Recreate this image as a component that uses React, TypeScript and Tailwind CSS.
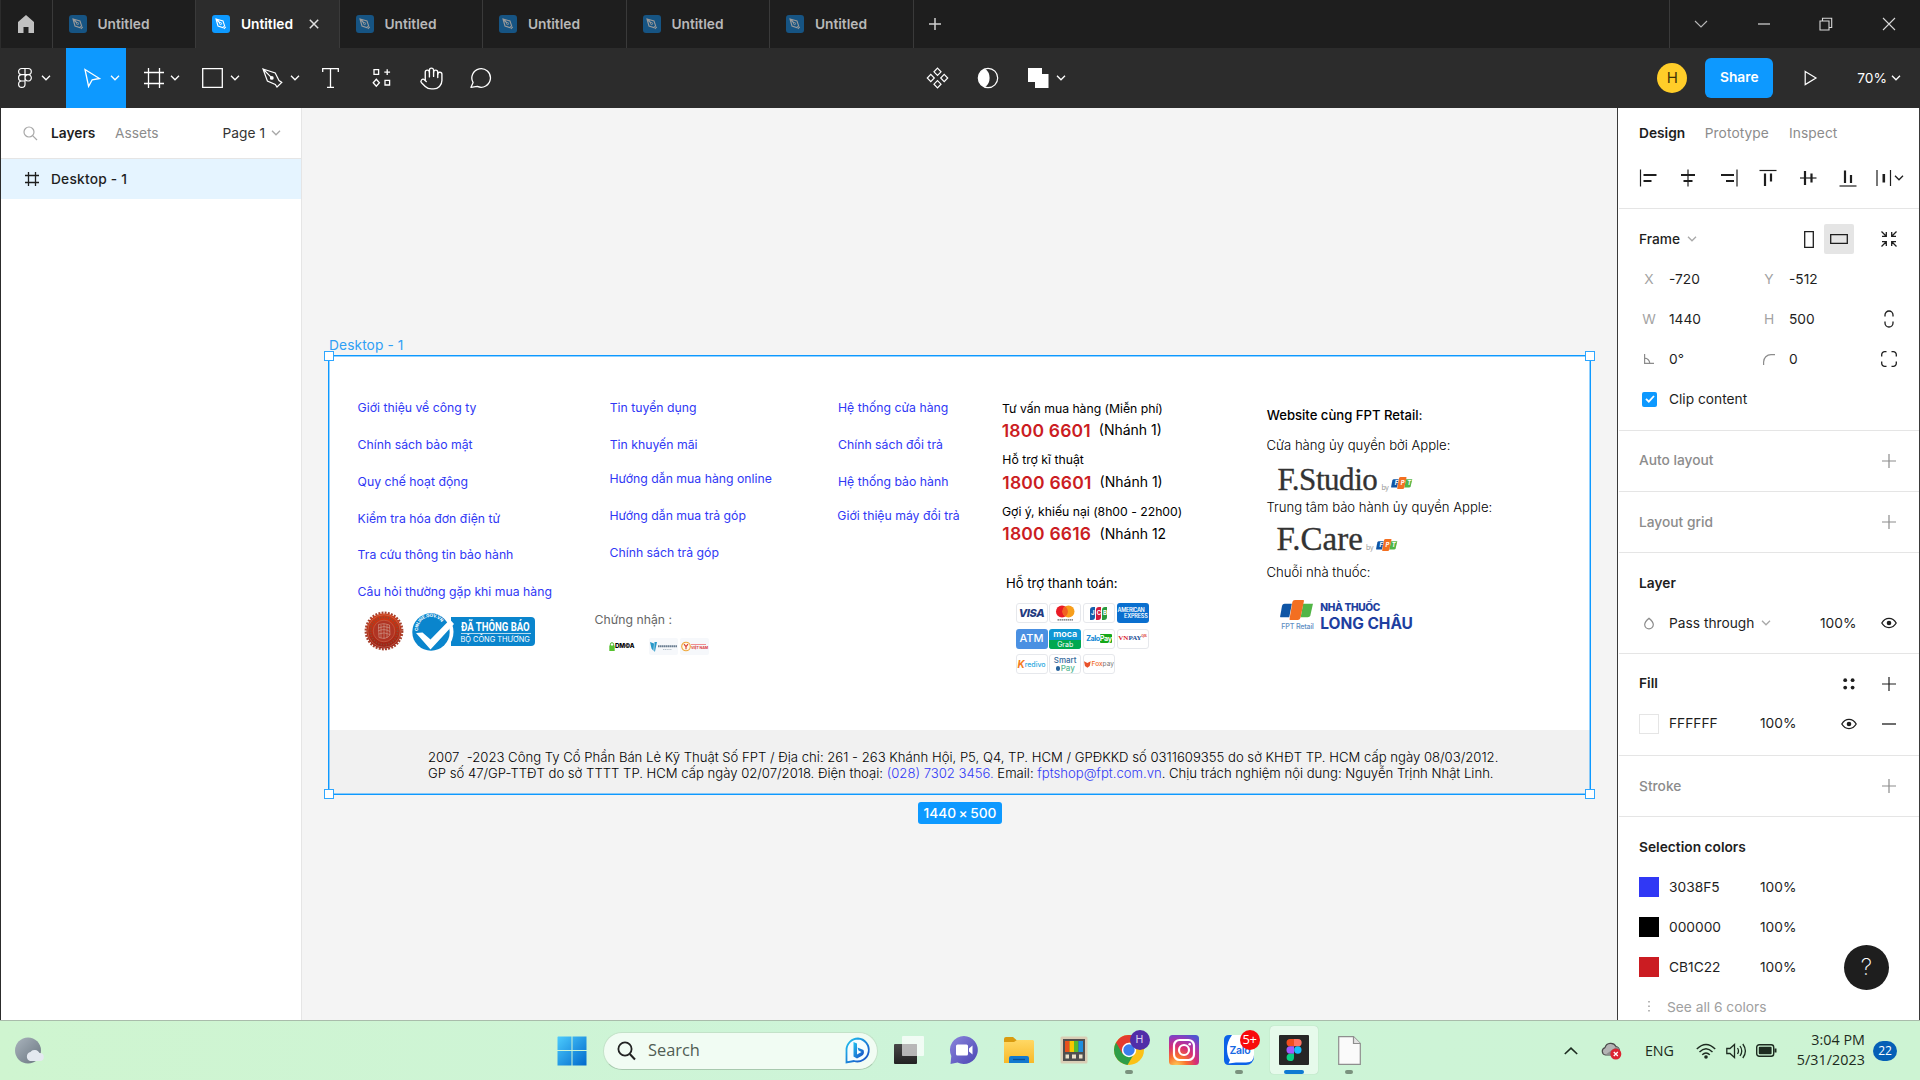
import type { ReactNode } from "react";
import { Hand } from "lucide-react";

type IconProps = { w: number; h: number; className?: string; children: ReactNode };

function Icon({ w, h, className = "", children }: IconProps) {
  return (
    <svg width={w} height={h} viewBox={`0 0 ${w} ${h}`} fill="none" stroke="currentColor" className={`block shrink-0 ${className}`}>
      {children}
    </svg>
  );
}

function Chevron({ className = "" }: { className?: string }) {
  return (
    <Icon w={10} h={6} className={className}>
      <path d="M1 .8 5 4.8 9 .8" strokeWidth="1.3" />
    </Icon>
  );
}

/* ---------- Title bar ---------- */

function PenBadge({ active }: { active: boolean }) {
  return (
    <span className={`flex h-[18px] w-[18px] items-center justify-center rounded-[3px] ${active ? "bg-[#0d99ff] text-white" : "bg-[#165483] text-[#9a9a9a]"}`}>
      <Icon w={12} h={12}>
        <path d="M1 1 8 3 9.6 7.8 7.8 9.6 3 8Z M1 1 5 5 M8.8 10.8 10.8 8.8" strokeWidth="1.1" />
        <circle cx="5.6" cy="5.6" r="1" strokeWidth=".9" />
      </Icon>
    </span>
  );
}

function Tab({ active = false }: { active?: boolean }) {
  return (
    <div className={`flex h-12 w-[143.5px] items-center border-r border-[#3a3a3a] pl-[16.4px] ${active ? "bg-[#2c2c2c] text-white" : "text-[#b8b8b8]"}`}>
      <PenBadge active={active} />
      <span className="ml-[10.5px] font-semibold">Untitled</span>
      {active && (
        <Icon w={10} h={10} className="ml-4 text-[#e0e0e0]">
          <path d="M.8.8 9.2 9.2M9.2.8.8 9.2" strokeWidth="1.5" />
        </Icon>
      )}
    </div>
  );
}

function TitleBar() {
  return (
    <header className="flex h-12 bg-[#1e1e1e]">
      <div className="flex w-[52.5px] items-center border-r border-[#3a3a3a] border-l border-l-[#2c2c2c] pl-[17px]">
        <Icon w={16} h={18} className="text-[#c0c0c0]">
          <path d="M0 7 8 0 16 7V18H10.5V12H5.5V18H0Z" fill="currentColor" stroke="none" />
        </Icon>
      </div>
      <Tab />
      <Tab active />
      <Tab />
      <Tab />
      <Tab />
      <Tab />
      <div className="flex w-[43px] items-center justify-center text-[#d0d0d0]">
        <Icon w={12} h={12}>
          <path d="M6 0V12M0 6H12" strokeWidth="1.5" />
        </Icon>
      </div>
      <div className="ml-auto grid w-[251px] grid-cols-4 border-l border-[#3a3a3a] text-[#b8b8b8]">
        <div className="flex items-center justify-center">
          <Icon w={14} h={8}><path d="M1 1 7 7 13 1" strokeWidth="1.1" /></Icon>
        </div>
        <div className="flex items-center justify-center text-[#d8d8d8]">
          <Icon w={12} h={2}><path d="M0 1H12" strokeWidth="1.2" /></Icon>
        </div>
        <div className="flex items-center justify-center text-[#d8d8d8]">
          <Icon w={14} h={14}><path d="M1 4H10V13H1ZM3.5 4V1.3H12.7V10.5H10" strokeWidth="1.1" /></Icon>
        </div>
        <div className="flex items-center justify-center text-[#d8d8d8]">
          <Icon w={14} h={14}><path d="M1 1 13 13M13 1 1 13" strokeWidth="1.1" /></Icon>
        </div>
      </div>
    </header>
  );
}

/* ---------- Toolbar ---------- */

function Toolbar() {
  return (
    <div className="flex h-[60px] items-center bg-[#2c2c2c] text-white">
      <div className="flex w-[66px] items-center pl-[17px]">
        <Icon w={16} h={22}>
          <path d="M8 1.5H4.7a3.1 3.1 0 0 0 0 6.2H8ZM8 1.5h3.2a3.1 3.1 0 0 1 0 6.2H8ZM8 7.7H4.7a3.1 3.1 0 0 0 0 6.3H8ZM8 14H4.7a3.2 3.2 0 1 0 3.3 3.2ZM11.2 7.7a3.15 3.15 0 1 0 .01 0Z" strokeWidth="1.2" />
        </Icon>
        <Chevron className="ml-2" />
      </div>
      <div className="flex h-full w-[60px] items-center bg-[#0d99ff] pl-[18px]">
        <Icon w={17} h={20}><path d="M1 1.5 15.5 10.5 8.2 11.8 4.6 18.4Z" strokeWidth="1.3" /></Icon>
        <Chevron className="ml-[9px]" />
      </div>
      <div className="flex w-[62px] items-center pl-[18px]">
        <Icon w={20} h={20}><path d="M4.5 0V20M15.5 0V20M0 4.5H20M0 15.5H20" strokeWidth="1.3" /></Icon>
        <Chevron className="ml-[6px]" />
      </div>
      <div className="flex w-[60px] items-center pl-[14px]">
        <Icon w={21} h={20}><path d="M.7.7H20.3V19.3H.7Z" strokeWidth="1.3" /></Icon>
        <Chevron className="ml-[7px]" />
      </div>
      <div className="flex w-[60px] items-center pl-[14px]">
        <Icon w={21} h={20}>
          <path d="M1 1 13.2 5 17 12.5 19.8 14.4 15 19 13.3 16.4 5.4 13ZM1 1 9 9.2" strokeWidth="1.2" />
          <circle cx="9.8" cy="9.9" r="1.9" fill="currentColor" stroke="none" />
        </Icon>
        <Chevron className="ml-[7px]" />
      </div>
      <div className="flex w-[52px] justify-center pr-[8px]">
        <Icon w={17} h={20}><path d="M.7 4V.7H16.3V4M8.5.7V19.3M5 19.3H12" strokeWidth="1.3" /></Icon>
      </div>
      <div className="flex w-[44px] justify-center">
        <Icon w={20} h={20}>
          <path d="M2 1.7H6.6V6.3H2ZM15.2 1.2V7M12.3 4.1H18.1M4.3 11.2 7.4 14.7 4.3 18.2 1.2 14.7ZM13 12.3H17.6V17H13Z" strokeWidth="1.3" />
        </Icon>
      </div>
      <div className="flex w-[54px] justify-center">
        <Hand size={25} strokeWidth={1.3} />
      </div>
      <div className="flex w-[46px] justify-center">
        <Icon w={23} h={22}><path d="M1 20.3 3.1 15.6A9.3 9.3 0 1 1 7.3 19.4Z" strokeWidth="1.3" strokeLinejoin="round" /></Icon>
      </div>

      <div className="ml-[422px] flex items-center">
        <Icon w={23} h={22}>
          <path d="M11.5 1.2 15 4.8 11.5 8.4 8 4.8ZM11.5 13.6 15 17.2 11.5 20.8 8 17.2ZM4.8 7.4 8.3 11 4.8 14.6 1.3 11ZM18.2 7.4 21.7 11 18.2 14.6 14.7 11Z" strokeWidth="1.2" />
        </Icon>
        <Icon w={22} h={22} className="ml-[27.5px]">
          <circle cx="11" cy="11" r="9.7" strokeWidth="1.2" />
          <path d="M8 1.8A9.8 9.8 0 0 0 8 20.2Q12.6 17 12.6 11T8 1.8Z" fill="currentColor" stroke="none" />
        </Icon>
        <Icon w={21} h={20} className="ml-[29.5px]"><path d="M0 0H14V6H20.5V20H7V14H0Z" fill="currentColor" stroke="none" /></Icon>
        <Chevron className="ml-[7px]" />
      </div>

      <div className="ml-auto flex items-center">
        <div className="flex h-[30px] w-[30px] items-center justify-center rounded-full bg-[#ffcd29] text-[15px] text-[#403307]">H</div>
        <div className="ml-[18px] flex h-10 w-[68px] items-center justify-center rounded-[6px] bg-[#0d99ff] pb-0.5 font-semibold">Share</div>
        <Icon w={14} h={16} className="ml-[31px]"><path d="M1.2 1.4 12 8 1.2 14.6Z" strokeWidth="1.2" /></Icon>
        <span className="ml-[39px]">70%</span>
        <Chevron className="mr-[19px] ml-[4px]" />
      </div>
    </div>
  );
}

/* ---------- Left panel ---------- */

function LayersPanel() {
  return (
    <aside className="w-[302px] border-r border-l border-[#e5e5e5] border-l-[#2c2c2c] bg-white text-[#1e1e1e]">
      <div className="flex h-[51px] items-center border-b border-[#e5e5e5] pl-[22px]">
        <Icon w={15} h={15} className="text-[#a8a8a8]">
          <circle cx="6" cy="6" r="5" strokeWidth="1.2" />
          <path d="M9.6 9.6 14 14" strokeWidth="1.2" />
        </Icon>
        <span className="ml-[13px] font-semibold">Layers</span>
        <span className="ml-[19.5px] text-[#8c8c8c]">Assets</span>
        <span className="ml-[64px] text-[#333]">Page 1</span>
        <Chevron className="ml-[6px] text-[#a8a8a8]" />
      </div>
      <div className="flex h-10 items-center bg-[#e5f4ff] pl-6">
        <Icon w={14} h={14}><path d="M3.5 0V14M10.5 0V14M0 3.5H14M0 10.5H14" strokeWidth="1.3" /></Icon>
        <span className="ml-[12px] font-medium tracking-[0.2px]">Desktop - 1</span>
      </div>
    </aside>
  );
}

/* ---------- Canvas ---------- */

function FptMark({ w, h }: { w: number; h: number }) {
  return (
    <svg width={w} height={h} viewBox="0 0 66 38" preserveAspectRatio="none" className="block shrink-0">
      <path d="M9 7H23L18 33H1Q0 33 .3 31L4 11Q5 7 9 7Z" fill="#0f55a5" />
      <path d="M45 7H64L59 29Q58 33 54 33H40Z" fill="#51b546" />
      <path d="M29 0H45Q47 0 46.500 2L40 33Q39 38 35 38H20Q18 38 18.500 36L24 4Q25 0 29 0Z" fill="#f36f21" />
    </svg>
  );
}

function FptMarkWithLetters() {
  return (
    <div className="relative">
      <FptMark w={22} h={12} />
      <span className="absolute inset-0 flex items-center justify-around pr-[1px] pl-[2px] text-[6px] leading-none font-bold text-white italic">
        <i>F</i><i>P</i><i>T</i>
      </span>
    </div>
  );
}

function Seal() {
  return (
    <svg width="40" height="40" viewBox="0 0 40 40" className="block">
      <defs>
        <linearGradient id="seal" x1="0" y1="0" x2="0" y2="1"><stop stopColor="#d23a14" /><stop offset="1" stopColor="#9d2016" /></linearGradient>
      </defs>
      <circle cx="20" cy="20" r="18.300" fill="none" stroke="#a5402c" strokeWidth="2.200" strokeDasharray="1.900 1.300" />
      <circle cx="20" cy="20" r="17.600" fill="url(#seal)" />
      <circle cx="20" cy="20" r="16.300" fill="none" stroke="#c08a70" strokeWidth=".5" />
      <circle cx="20" cy="20" r="13.600" fill="none" stroke="#8f4a32" strokeWidth="1.800" strokeDasharray="1.200 1.400" />
      <circle cx="20" cy="20" r="10.800" fill="#b03423" stroke="#c9694f" strokeWidth=".6" />
      <path d="M14.500 13.500Q20 11.500 25.500 14L26 24Q22 29 15 26.500ZM14 17Q20 14 26 17M14 20Q20 17 26 20.500M14.500 23Q20 20.500 26 23.500M17 14V27M20 13V28M23 13.500V27" stroke="#d2a090" strokeWidth=".6" fill="none" />
    </svg>
  );
}

function CertifiedBadge() {
  return (
    <div className="relative h-[38px] w-[123px]">
      <div className="absolute top-1 right-0 h-[29px] w-[84px] rounded-r-[4px] bg-[#0a85cd] pl-[9.500px] text-white">
        <div className="mt-[2px] h-[15px] w-[70px] border-b border-white/70">
          <span className="block w-max origin-left scale-x-[0.735] font-['Roboto'] text-[13px] leading-[15px] font-bold">ĐÃ THÔNG BÁO</span>
        </div>
        <span className="block text-[7.400px] leading-[11px] whitespace-nowrap">BỘ CÔNG THƯƠNG</span>
      </div>
      <svg width="44" height="38" viewBox="0 0 44 38" className="absolute top-0 left-0">
        <circle cx="20" cy="19" r="21.500" fill="#fff" />
        <circle cx="19" cy="19" r="18.700" fill="#0a85cd" />
        <path d="M4 20 10.500 19.500 18.500 26.500 38 6.500 42 11 18.500 36.500Z" fill="#fff" />
        <path id="sealArc" d="M6 18A13 13 0 0 1 31.500 13.500" fill="none" />
        <text fontSize="4.500" fontWeight="700" fill="#fff" fontFamily="Inter" letterSpacing="-.2">
          <textPath href="#sealArc">ONLINE.GOV.VN</textPath>
        </text>
      </svg>
    </div>
  );
}

const card = "flex h-[20px] w-[32px] items-center justify-center overflow-hidden rounded-[3px] border border-[#e6e8ec] bg-white whitespace-nowrap";
const solidCard = "flex h-[20px] w-[32px] flex-col items-center justify-center overflow-hidden rounded-[3px] whitespace-nowrap text-white";

function Payments() {
  return (
    <div className="absolute top-[247px] left-[686.500px] grid grid-cols-[repeat(4,32px)] gap-x-[1.700px] gap-y-[5.500px] leading-none">
      <div className={card}><b className="text-[11px] font-extrabold tracking-[-0.4px] text-[#1f3a80] italic">VISA</b></div>
      <div className={card}>
        <svg width="20" height="16" viewBox="0 0 20 16">
          <circle cx="7" cy="6.500" r="6" fill="#ea1b25" />
          <circle cx="13.500" cy="6.500" r="6" fill="#f79e1b" />
          <path d="M10.200 1.500a6 6 0 0 1 0 10a6 6 0 0 1 0-10Z" fill="#f26122" />
          <path d="M2.500 14.800H18" stroke="#666" strokeWidth="1.200" strokeDasharray="1.500 .5" />
        </svg>
      </div>
      <div className={card}>
        <div className="flex h-[13px] gap-[1px] text-[6px] font-bold text-white">
          <span className="flex w-[5px] items-center justify-center rounded-tl-[3px] rounded-br-[3px] bg-[#1560ad]">J</span>
          <span className="flex w-[5px] items-center justify-center rounded-tl-[3px] rounded-br-[3px] bg-[#d31b3c]">C</span>
          <span className="flex w-[5px] items-center justify-center rounded-tl-[3px] rounded-br-[3px] bg-[#2a9a3c]">B</span>
        </div>
      </div>
      <div className={`${solidCard} bg-[#0a6fcf] text-[5.500px] leading-[6px] font-semibold text-[#bcd9f5]`}>
        <span className="self-start pl-[1px] tracking-[-0.350px]">AMERICAN</span>
        <span className="self-end pr-[1px] tracking-[-0.2px]">EXPRESS</span>
      </div>
      <div className={`${solidCard} bg-[#4a90e2] text-[11px] font-medium`}>ATM</div>
      <div className={`${solidCard} bg-[#0f97d4]`}>
        <span className="flex h-[11px] items-center pb-[1px] text-[9px] font-semibold">moca</span>
        <span className="flex h-[9px] w-full items-center justify-center bg-[#00a84f] text-[7px]">Grab</span>
      </div>
      <div className={`${card} text-[7.200px] font-bold tracking-[-0.4px]`}>
        <span className="text-[#1487d4]">Zalo</span>
        <span className="rounded-[1px] bg-[#16a818] py-[0.5px] text-white">Pay</span>
      </div>
      <div className={`${card} font-['Liberation_Serif'] text-[7px] font-bold`}>
        <span className="text-[#d8232a]">VN</span><span className="text-[#1d4f95]">PAY</span><span className="pb-[3px] text-[3.500px] text-[#d8232a]">QR</span>
      </div>
      <div className={`${card} text-[7px] font-medium text-[#28a9e0]`}>
        <b className="text-[10px] text-[#f47b20] italic">K</b>redivo
      </div>
      <div className={`${card} flex-col text-[8px] leading-[8px] font-medium`}>
        <span className="text-[#35699c]">Smart</span>
        <span className="flex items-center gap-[1px] text-[#58b894]"><i className="h-[5px] w-[4px] rounded-full bg-[#27639c]" />Pay</span>
      </div>
      <div className={`${card} text-[6.500px] text-[#777]`}>
        <svg width="7" height="7" viewBox="0 0 7 7"><path d="M0 0 3.500 2 7 0 6 5 3.500 7 1 5Z" fill="#e8512a" /></svg>
        <span className="ml-[1px] font-medium text-[#ef6b2b]">Fox</span>pay
      </div>
    </div>
  );
}

function Certificates() {
  return (
    <div className="absolute top-[281.500px] left-[280px] flex h-[18px] items-center leading-none">
      <svg width="6" height="9" viewBox="0 0 6 9">
        <path d="M1.400 4V2.300a1.600 1.600 0 0 1 3.200 0V4" fill="none" stroke="#4fb62c" strokeWidth="1" />
        <path d="M.3 3.500H5.700V9H.3Z" fill="#56c22f" />
      </svg>
      <b className="w-[21px] text-[6.200px] font-extrabold tracking-[-0.3px] text-black">DM©A</b>
      <div className="ml-[13px] flex h-[17px] w-[29px] items-center justify-center rounded-[2px] bg-[#f6f8fb]">
        <svg width="27" height="12" viewBox="0 0 27 12">
          <path d="M0 1 4 2.500 3.500 10 1.500 7.500ZM4.500 1H7L5 10.500H4.200Z" fill="#2898c8" />
          <path d="M8 5.300H27" stroke="#6a7d91" strokeWidth="2" strokeDasharray="1.600 .4" />
          <path d="M13 8.500H22" stroke="#b5c0cb" strokeWidth="1.200" strokeDasharray="1.200 .6" />
        </svg>
      </div>
      <div className="ml-[2px] flex h-[17px] w-[29px] items-center justify-center rounded-[2px] bg-[#f6f8fb]">
        <svg width="10" height="11" viewBox="0 0 10 11">
          <circle cx="5" cy="5.500" r="4.300" fill="#fff8e8" stroke="#efa73a" strokeWidth="1.100" />
          <path d="M3 3.200 5 5.600 7 3.200M5 5.600V8.300" stroke="#d8392c" strokeWidth="1.100" fill="none" />
        </svg>
        <span className="flex flex-col text-[3.600px] leading-[4px] font-bold tracking-[-0.1px] text-[#dc3a3f]">
          <i className="mb-[0.5px] h-[1.500px] w-[15px] bg-[#ee8d90]" />VIỆT NAM
        </span>
      </div>
    </div>
  );
}

function Handle({ className }: { className: string }) {
  return <i className={`absolute h-[10px] w-[10px] border-[1.500px] border-[#2ea6ff] bg-white ${className}`} />;
}

const label = "absolute whitespace-nowrap leading-5";
const links = "absolute flex flex-col gap-[16.750px] whitespace-nowrap leading-5 text-[12.250px] text-[#3038f5]";
const phone = "text-[17.500px] font-semibold tracking-[0.200px] text-[#cb1c22]";

function DesktopFrame() {
  return (
    <div className="absolute top-[248px] left-[27px] h-[438px] w-[1261px] bg-white text-[12.250px] text-black">
      <div className={`${links} top-[42.300px] left-[28.600px]`}>
        <span>Giới thiệu về công ty</span>
        <span>Chính sách bảo mật</span>
        <span>Quy chế hoạt động</span>
        <span>Kiểm tra hóa đơn điện tử</span>
        <span>Tra cứu thông tin bảo hành</span>
        <span>Câu hỏi thường gặp khi mua hàng</span>
      </div>
      <div className={`${links} top-[42.300px] left-[280.700px]`}>
        <span>Tin tuyển dụng</span>
        <span>Tin khuyến mãi</span>
      </div>
      <div className={`${links} top-[113px] left-[280.500px]`}>
        <span>Hướng dẫn mua hàng online</span>
        <span>Hướng dẫn mua trả góp</span>
        <span>Chính sách trả góp</span>
      </div>
      <div className={`${links} top-[42.300px] left-[509px]`}>
        <span>Hệ thống cửa hàng</span>
        <span>Chính sách đổi trả</span>
        <span>Hệ thống bảo hành</span>
      </div>
      <div className={`${links} top-[149.500px] left-[508.300px]`}>
        <span>Giới thiệu máy đổi trả</span>
      </div>

      <div className="absolute top-[254.500px] left-[34.500px]"><Seal /></div>
      <div className="absolute top-[256.500px] left-[83px]"><CertifiedBadge /></div>
      <span className={`${label} top-[253.500px] left-[265.500px] text-[#666]`}>Chứng nhận :</span>
      <Certificates />

      <span className={`${label} top-[42.500px] left-[673px] tracking-[-0.030px]`}>Tư vấn mua hàng (Miễn phí)</span>
      <span className={`${label} ${phone} top-[65px] left-[672.700px]`}>1800 6601</span>
      <span className={`${label} top-[64px] left-[769.800px] text-[14px]`}>(Nhánh 1)</span>
      <span className={`${label} top-[94px] left-[673.300px]`}>Hỗ trợ kĩ thuật</span>
      <span className={`${label} ${phone} top-[116.500px] left-[673.300px]`}>1800 6601</span>
      <span className={`${label} top-[116px] left-[770.600px] text-[14px]`}>(Nhánh 1)</span>
      <span className={`${label} top-[145.500px] left-[673px] tracking-[-0.020px]`}>Gợi ý, khiếu nại (8h00 - 22h00)</span>
      <span className={`${label} ${phone} top-[168px] left-[673.300px]`}>1800 6616</span>
      <span className={`${label} top-[167.500px] left-[770.600px] text-[14px]`}>(Nhánh 12</span>
      <span className={`${label} top-[216.500px] left-[677px] text-[13.125px]`}>Hỗ trợ thanh toán:</span>
      <Payments />

      <span className={`${label} top-[49px] left-[937.700px] text-[13.125px] font-medium`}>Website cùng FPT Retail:</span>
      <span className={`${label} top-[79px] left-[937.500px] text-[13.125px] font-light tracking-[-0.020px]`}>Cửa hàng ủy quyền bởi Apple:</span>
      <div className="absolute top-[106.500px] left-[948.500px] flex items-end">
        <span className="font-['Liberation_Serif'] text-[31px] leading-[34px] tracking-[-0.450px] text-[#333] [-webkit-text-stroke:0.35px_#333]">F.Studio</span>
        <span className="mb-[6px] ml-[4px] text-[7px] leading-none tracking-[-0.5px] text-[#999]">by</span>
        <div className="mb-[7.500px] ml-[3px]"><FptMarkWithLetters /></div>
      </div>
      <span className={`${label} top-[141px] left-[937.500px] text-[13.125px] font-light`}>Trung tâm bảo hành ủy quyền Apple:</span>
      <div className="absolute top-[165px] left-[947.500px] flex items-end">
        <span className="font-['Liberation_Serif'] text-[33px] leading-[36px] tracking-[0.050px] text-[#333] [-webkit-text-stroke:0.35px_#333]">F.Care</span>
        <span className="mb-[6px] ml-[3px] text-[7px] leading-none tracking-[-0.5px] text-[#999]">by</span>
        <div className="mb-[6px] ml-[3px]"><FptMarkWithLetters /></div>
      </div>
      <span className={`${label} top-[206px] left-[937.500px] text-[13.125px] font-light`}>Chuỗi nhà thuốc:</span>
      <div className="absolute top-[244px] left-[951.300px] flex whitespace-nowrap">
        <div>
          <FptMark w={34} h={20} />
          <span className="mt-[3px] ml-[1px] block text-[7.200px] leading-[8px] font-medium tracking-[-0.2px] text-[#5f8fc4]">FPT Retail</span>
        </div>
        <div className="ml-[6px] text-[#1e3fa0]">
          <span className="block pt-[2px] text-[10.200px] leading-[11px] font-extrabold tracking-[-0.350px]">NHÀ THUỐC</span>
          <span className="block text-[15.500px] leading-[21px] font-bold tracking-[-0.050px]">LONG CHÂU</span>
        </div>
      </div>

      <div className="absolute bottom-0 left-0 h-[64px] w-full bg-[#f1f1f1] pt-[18.500px] pl-[99px] text-[13.125px] leading-4 font-light whitespace-pre">
        <p className="tracking-[0.008px]">2007  -2023 Công Ty Cổ Phần Bán Lẻ Kỹ Thuật Số FPT / Địa chỉ: 261 - 263 Khánh Hội, P5, Q4, TP. HCM / GPĐKKD số 0311609355 do sở KHĐT TP. HCM cấp ngày 08/03/2012.</p>
        <p>
          GP số 47/GP-TTĐT do sở TTTT TP. HCM cấp ngày 02/07/2018. Điện thoại: <span className="text-[#3038f5]">(028) 7302 3456.</span> Email: <span className="text-[#3038f5]">fptshop@fpt.com.vn</span>. Chịu trách nghiệm nội dung: Nguyễn Trịnh Nhật Linh.
        </p>
      </div>

      <div className="absolute -inset-[1px] border-[1.500px] border-[#0d99ff] shadow-[inset_0_0_0_1px_rgba(13,153,255,0.45)]" />
      <Handle className="-top-[5px] -left-[5px]" />
      <Handle className="-top-[5px] -right-[5px]" />
      <Handle className="-bottom-[5px] -left-[5px]" />
      <Handle className="-right-[5px] -bottom-[5px]" />
    </div>
  );
}

function Canvas() {
  return (
    <main className="relative flex-1 overflow-hidden bg-[#f4f4f4]">
      <span className="absolute top-[227px] left-[27px] leading-5 tracking-[0.1px] text-[#2f9ff5]">Desktop - 1</span>
      <DesktopFrame />
      <div className="absolute top-[694px] left-[616px] flex h-[22px] w-[84px] items-center justify-center rounded-[3px] bg-[#0d99ff] font-medium tracking-[-0.050px] text-white [word-spacing:-1px]">1440 × 500</div>
    </main>
  );
}

/* ---------- Design panel ---------- */

function Plus({ className = "text-[#8c8c8c]" }: { className?: string }) {
  return <Icon w={14} h={14} className={className}><path d="M7 0V14M0 7H14" strokeWidth="1.2" /></Icon>;
}

function Eye() {
  return (
    <Icon w={16} h={12}>
      <path d="M.8 6Q3.500 1.400 8 1.400T15.200 6Q12.500 10.600 8 10.600T.8 6Z" strokeWidth="1.300" />
      <circle cx="8" cy="6" r="2.300" fill="currentColor" stroke="none" />
    </Icon>
  );
}

function EmptySection({ title }: { title: string }) {
  return (
    <section className="flex h-[61.300px] shrink-0 items-center justify-between border-b border-[#e5e5e5] pr-[23px] pl-5 font-medium text-[#8c8c8c]">
      {title}
      <Plus />
    </section>
  );
}

function ColorRow({ swatch, hex }: { swatch: string; hex: string }) {
  return (
    <div className="flex h-10 items-center">
      <i className={`h-5 w-5 ${swatch}`} />
      <span className="ml-[10px] w-[91px]">{hex}</span>
      <span>100%</span>
    </div>
  );
}

function Field({ name, value, name2, value2, end }: { name: ReactNode; value: string; name2: ReactNode; value2: string; end?: ReactNode }) {
  return (
    <div className="flex h-10 items-center">
      <span className="flex w-5 justify-center text-[#a3a3a3]">{name}</span>
      <span className="ml-[10px] w-[90px]">{value}</span>
      <span className="flex w-5 justify-center text-[#a3a3a3]">{name2}</span>
      <span className="ml-[10px] w-[90px]">{value2}</span>
      <span className="flex w-[19px] justify-center">{end}</span>
    </div>
  );
}

function DesignPanel() {
  return (
    <aside className="relative flex w-[303px] flex-col overflow-hidden border-r border-l border-[#3a3a3a] bg-white pl-px text-[#1e1e1e]">
      <div className="flex h-[50px] shrink-0 items-center pl-5">
        <span className="font-semibold">Design</span>
        <span className="ml-[19.500px] tracking-[0.080px] text-[#8c8c8c]">Prototype</span>
        <span className="ml-[20px] tracking-[0.080px] text-[#8c8c8c]">Inspect</span>
      </div>
      <div className="flex h-[51px] shrink-0 items-center border-b border-[#e5e5e5] pb-[10px] pl-5">
        <Icon w={18} h={18}><path d="M1.500 .5V17.500" strokeWidth="1.200" /><path d="M4.500 6H17.500M4.500 12H12.500" strokeWidth="2.200" /></Icon>
        <Icon w={18} h={18} className="ml-[23px]"><path d="M8 .5V17.500" strokeWidth="1.200" /><path d="M1 6H15M3.500 12H12.500" strokeWidth="2.200" /></Icon>
        <Icon w={18} h={18} className="ml-[22px]"><path d="M17 .5V17.500" strokeWidth="1.200" /><path d="M1 6H14M6 12H14" strokeWidth="2.200" /></Icon>
        <Icon w={18} h={18} className="ml-[21px]"><path d="M.5 1.500H17.500" strokeWidth="1.200" /><path d="M6 4.500V17M12 4.500V12.500" strokeWidth="2.200" /></Icon>
        <Icon w={18} h={18} className="ml-[22px]"><path d="M1 9H17.500" strokeWidth="1.200" /><path d="M6 2V16M12.500 4.500V13.500" strokeWidth="2.200" /></Icon>
        <Icon w={18} h={18} className="ml-[22px]"><path d="M.5 17H17.500" strokeWidth="1.200" /><path d="M6 1.500V14M12 6V14" strokeWidth="2.200" /></Icon>
        <Icon w={18} h={18} className="ml-[17.500px]"><path d="M2 1V17M15.500 1V17" strokeWidth="1.200" /><path d="M8.800 5V13.500" strokeWidth="2.600" /></Icon>
        <Chevron className="ml-[1px]" />
      </div>

      <section className="h-[221.500px] shrink-0 border-b border-[#e5e5e5] py-[10px] pl-5">
        <div className="flex h-10 items-center">
          <span className="font-medium">Frame</span>
          <Chevron className="ml-[7px] text-[#a8a8a8]" />
          <Icon w={10} h={17} className="ml-[107px]"><path d="M.7.7H9.300V16.300H.7Z" strokeWidth="1.300" /></Icon>
          <span className="ml-[10px] flex h-[30px] w-[30px] items-center justify-center rounded-[2px] bg-[#e5e5e5]">
            <Icon w={18} h={10}><path d="M.7.7H17.300V9.300H.7Z" strokeWidth="1.300" /></Icon>
          </span>
          <Icon w={16} h={16} className="ml-[27px]">
            <path d="M.5.5 5 5M5.300 1V5.300H1M15.500.5 11 5M10.700 1V5.300H15M.5 15.500 5 11M5.300 15V10.700H1M15.500 15.500 11 11M10.700 15V10.700H15" strokeWidth="1.300" />
          </Icon>
        </div>
        <Field name="X" value="-720" name2="Y" value2="-512" />
        <Field
          name="W" value="1440" name2="H" value2="500"
          end={<Icon w={10} h={18}><path d="M1 6.500V5A4 4 0 0 1 9 5V6.500M1 11.500V13A4 4 0 0 0 9 13V11.500" strokeWidth="1.300" /></Icon>}
        />
        <Field
          name={<Icon w={10} h={10} className="text-[#8c8c8c]"><path d="M.6 0V9.400H10M.6 4.200A5.200 5.200 0 0 1 5.800 9.400" strokeWidth="1.200" /></Icon>}
          value="0°"
          name2={<Icon w={12} h={11} className="text-[#8c8c8c]"><path d="M.6 11V8A7.400 7.400 0 0 1 8 .6H12" strokeWidth="1.200" /></Icon>}
          value2="0"
          end={<Icon w={16} h={16}><path d="M.7 5.500V3.700A3 3 0 0 1 3.700.7H5.500M10.500.7H12.300A3 3 0 0 1 15.300 3.700V5.500M15.300 10.500V12.300A3 3 0 0 1 12.300 15.300H10.500M5.500 15.300H3.700A3 3 0 0 1 .7 12.300V10.500" strokeWidth="1.300" /></Icon>}
        />
        <div className="flex h-10 items-center">
          <span className="ml-[3px] flex h-[15px] w-[15px] items-center justify-center rounded-[2px] bg-[#0d99ff] text-white">
            <Icon w={10} h={8}><path d="M1 3.800 3.800 6.600 9 1" strokeWidth="1.800" /></Icon>
          </span>
          <span className="ml-[12px]">Clip content</span>
        </div>
      </section>

      <EmptySection title="Auto layout" />
      <EmptySection title="Layout grid" />

      <section className="h-[100.700px] shrink-0 border-b border-[#e5e5e5] py-[10px] pl-5">
        <div className="flex h-10 items-center font-semibold">Layer</div>
        <div className="flex h-10 items-center">
          <span className="flex w-5 justify-center text-[#8c8c8c]">
            <Icon w={10} h={13}><path d="M5 1.200Q9.300 4.800 9.300 7.600A4.300 4.300 0 0 1 .7 7.600Q.7 4.800 5 1.200Z" strokeWidth="1.200" /></Icon>
          </span>
          <span className="ml-[10px]">Pass through</span>
          <Chevron className="ml-[7px] text-[#a8a8a8]" />
          <span className="ml-auto w-[61px]">100%</span>
          <span className="mr-[22px]"><Eye /></span>
        </div>
      </section>

      <section className="h-[102px] shrink-0 border-b border-[#e5e5e5] py-[10px] pl-5">
        <div className="flex h-10 items-center pr-[23px] font-semibold">
          Fill
          <Icon w={12} h={12} className="mr-[27px] ml-auto">
            <g fill="currentColor" stroke="none">
              <circle cx="2.200" cy="2.200" r="1.900" /><circle cx="9.600" cy="2.200" r="1.900" />
              <circle cx="2.200" cy="9.600" r="1.900" /><circle cx="9.600" cy="9.600" r="1.900" />
            </g>
          </Icon>
          <Plus className="text-[#1e1e1e]" />
        </div>
        <div className="flex items-center pr-[23px]">
          <ColorRow swatch="border border-[#e5e5e5] bg-white" hex="FFFFFF" />
          <span className="mr-[25px] ml-auto"><Eye /></span>
          <Icon w={14} h={2}><path d="M0 1H14" strokeWidth="1.300" /></Icon>
        </div>
      </section>

      <EmptySection title="Stroke" />

      <section className="shrink-0 pt-[10px] pl-5">
        <div className="flex h-10 items-center font-semibold">Selection colors</div>
        <ColorRow swatch="bg-[#3038f5]" hex="3038F5" />
        <ColorRow swatch="bg-black" hex="000000" />
        <ColorRow swatch="bg-[#cb1c22]" hex="CB1C22" />
        <div className="flex h-10 items-center text-[#a0a0a0]">
          <Icon w={2} h={12} className="ml-[9px]"><path d="M1 0V12" strokeWidth="1.500" strokeDasharray="1.500 3" /></Icon>
          <span className="ml-[17px]">See all 6 colors</span>
        </div>
      </section>

      <div className="absolute top-[837px] left-[226px] flex h-[45px] w-[45px] items-center justify-center rounded-full bg-[#1e1e1e] text-[23px] font-extralight text-white">?</div>
    </aside>
  );
}

/* ---------- Taskbar ---------- */

function Slot({ children, mark }: { children: ReactNode; mark?: string }) {
  return (
    <div className="relative flex h-full w-[55px] items-center justify-center pb-[1px]">
      {children}
      {mark && <i className={`absolute bottom-[6px] h-[4px] rounded-full ${mark}`} />}
    </div>
  );
}

function AppIcons() {
  return (
    <div className="ml-[3.500px] flex h-full">
      <Slot>
        <svg width="30" height="28" viewBox="0 0 30 28">
          <defs><linearGradient id="tv" x1="0" y1="0" x2="0" y2="1"><stop stopColor="#484848" /><stop offset="1" stopColor="#222" /></linearGradient></defs>
          <rect y="8" width="23" height="20" rx="1" fill="url(#tv)" />
          <rect x="8" width="22" height="20" rx="1" fill="#fff" fillOpacity=".72" />
          <rect x="8" y="8" width="15" height="12" fill="#a5a5a5" fillOpacity=".5" />
        </svg>
      </Slot>
      <Slot>
        <svg width="30" height="30" viewBox="0 0 30 30">
          <defs><linearGradient id="chat" x1="0" y1="0" x2="1" y2="1"><stop stopColor="#8b86dc" /><stop offset="1" stopColor="#4b45b4" /></linearGradient></defs>
          <path d="M15 1A14 14 0 1 1 8.500 27.500L1.500 29 2.300 21A14 14 0 0 1 15 1Z" fill="url(#chat)" />
          <rect x="7" y="9.500" width="12" height="11" rx="1.500" fill="#fff" />
          <path d="M20 13.500 23.500 10.500V19.500L20 16.500Z" fill="#fff" />
        </svg>
      </Slot>
      <Slot>
        <svg width="30" height="28" viewBox="0 0 30 28">
          <defs><linearGradient id="folder" x1="0" y1="0" x2="0" y2="1"><stop stopColor="#ffd864" /><stop offset="1" stopColor="#f8b928" /></linearGradient></defs>
          <path d="M0 3Q0 1 2 1H9L13 4.500H27Q30 4.500 30 7V12H0Z" fill="#d99b10" />
          <path d="M0 6H10L13 4H29L30 5V27H0Z" fill="url(#folder)" />
          <path d="M5 27V22Q5 20 7 20H23Q25 20 25 22V27Z" fill="#1279cf" />
          <path d="M9 23.500H21" stroke="#0b4f93" strokeWidth="1.300" />
        </svg>
      </Slot>
      <Slot>
        <svg width="28" height="28" viewBox="0 0 28 28">
          <rect x=".5" y=".5" width="27" height="27" rx="1.500" fill="#d9cdb5" />
          <rect x="3" y="3" width="22" height="22" fill="#4f4f4f" />
          <path d="M5 5H9.500V16H5Z" fill="#e8501c" /><path d="M9.500 5H14V16H9.500Z" fill="#f7c600" />
          <path d="M14 5H18.500V16H14Z" fill="#55ba2e" /><path d="M18.500 5H23V16H18.500Z" fill="#1f8fe0" />
          <path d="M5.500 18.500H9V22.500H5.500ZM12 18.500H16V22.500H12ZM19 18.500H22.500V22.500H19Z" fill="#e9dfca" />
        </svg>
      </Slot>
      <Slot mark="w-[8px] bg-[#7a927e]">
        <svg width="30" height="30" viewBox="0 0 30 30">
          <circle cx="15" cy="15" r="15" fill="#fbc116" />
          <path d="M15 15 2 7.500A15 15 0 0 0 13.500 29.900L20.500 18Z" fill="#2d9e48" />
          <path d="M2 7.500A15 15 0 0 1 28 7.500H15L8.500 18.700Z" fill="#e33b2e" />
          <circle cx="15" cy="15" r="7.200" fill="#fff" /><circle cx="15" cy="15" r="5.700" fill="#3b7ded" />
        </svg>
        <b className="absolute top-[9px] right-[7px] flex h-5 w-5 items-center justify-center rounded-full bg-[#512da8] font-['Roboto'] text-[11px] font-normal text-[#d9cff0]">H</b>
      </Slot>
      <Slot>
        <svg width="30" height="30" viewBox="0 0 30 30">
          <defs>
            <radialGradient id="ig" cx=".25" cy="1.050" r="1.150"><stop stopColor="#ffd45a" /><stop offset=".3" stopColor="#f9702f" /><stop offset=".58" stopColor="#d62d76" /><stop offset=".82" stopColor="#9a38b8" /><stop offset="1" stopColor="#5254d0" /></radialGradient>
          </defs>
          <rect width="30" height="30" rx="3.500" fill="url(#ig)" />
          <rect x="5" y="5" width="20" height="20" rx="5.500" fill="none" stroke="#fff" strokeWidth="2.200" />
          <circle cx="15" cy="15" r="5" fill="none" stroke="#fff" strokeWidth="2.200" /><circle cx="20.700" cy="9.300" r="1.300" fill="#fff" />
        </svg>
      </Slot>
      <Slot mark="w-[8px] bg-[#7a927e]">
        <svg width="30" height="30" viewBox="0 0 30 30">
          <path d="M5 0H25A5 5 0 0 1 30 5V22A8 8 0 0 1 22 30H5Q0 30 0 25V5Q0 0 5 0Z" fill="#0b62e8" />
          <path d="M8 0H26A4 4 0 0 1 30 4V20Q30 27.500 22 27.500H12L4.500 28.500 6 25Q3 21 3 14T8 0Z" fill="#fff" />
          <text x="5.500" y="18.500" fontFamily="Inter" fontWeight="600" fontSize="10.500" letterSpacing="-.3" fill="#1668e3">Zalo</text>
        </svg>
        <b className="absolute top-[9px] right-[7px] flex h-5 w-5 items-center justify-center rounded-full bg-[#f80b0b] font-['Open_Sans'] text-[13px] font-normal tracking-[-0.5px] text-white">5+</b>
      </Slot>
      <Slot mark="w-5 bg-[#0f7ad2]">
        <div className="flex h-[48px] w-[48px] items-center justify-center rounded-[4px] bg-white/50 shadow-[0_0_1px_rgba(0,0,0,0.25)]">
          <svg width="30" height="30" viewBox="0 0 30 30">
            <rect width="30" height="30" rx="1" fill="#262626" />
            <path d="M15 4H11.200a3.600 3.600 0 0 0 0 7.300H15Z" fill="#f24e1e" /><path d="M15 4h4a3.650 3.650 0 0 1 0 7.300H15Z" fill="#ff7262" />
            <path d="M15 11.300H11.200a3.700 3.700 0 0 0 0 7.400H15Z" fill="#a259ff" /><circle cx="18.800" cy="15" r="3.700" fill="#1abcfe" />
            <path d="M15 18.700H11.400a3.700 3.700 0 1 0 3.600 3.700Z" fill="#0acf83" />
          </svg>
        </div>
      </Slot>
      <Slot mark="w-[8px] bg-[#7a927e]">
        <svg width="23" height="29" viewBox="0 0 23 29"><path d="M.7.700H15.500L22.300 7.500V28.300H.7Z" fill="#fafafa" stroke="#8e8e8e" strokeWidth="1.200" /><path d="M15.500.7V7.500H22.300" fill="#e2e2e2" stroke="#8e8e8e" strokeWidth="1.200" /></svg>
      </Slot>
    </div>
  );
}

function Tray() {
  return (
    <div className="ml-auto flex items-center pr-[23px] font-['Open_Sans'] text-[14.300px] text-[#1d2b20]">
      <Icon w={14} h={8}><path d="M.8 7 7 1.200 13.200 7" strokeWidth="1.600" /></Icon>
      <svg width="21" height="18" viewBox="0 0 21 18" className="ml-[23px]">
        <path d="M4.500 13A3.800 3.800 0 0 1 4 5.600 6 6 0 0 1 15 4.500Q18 5 18.500 8.500L12 13Z" fill="#b4b4b4" stroke="#4a4a4a" strokeWidth="1.200" />
        <path d="M4 13 15 5Q18 5 18.500 8.500L12 13Z" fill="#8c8c8c" />
        <circle cx="14.800" cy="12" r="5.500" fill="#dc2430" /><path d="M12.800 10 16.800 14M16.800 10 12.800 14" stroke="#fff" strokeWidth="1.300" />
      </svg>
      <span className="ml-[23px]">ENG</span>
      <Icon w={20} h={16} className="ml-[22px]">
        <path d="M.8 6Q10-3 19.200 6M3.500 9Q10 2.500 16.500 9M6.200 11.800Q10 8 13.800 11.800" strokeWidth="1.400" />
        <circle cx="10" cy="14" r="1.800" fill="currentColor" stroke="none" />
      </Icon>
      <Icon w={21} h={16} className="ml-[10px]">
        <path d="M.8 5.500H4L8.500 1.500V14.500L4 10.500H.8ZM11.500 5Q13.500 8 11.500 11M14 3Q17.500 8 14 13M16.800 1Q22 8 16.800 15" strokeWidth="1.300" />
      </Icon>
      <Icon w={21} h={13} className="ml-[9px]">
        <rect x=".7" y=".7" width="17" height="11.600" rx="2.500" strokeWidth="1.400" />
        <rect x="2.800" y="2.800" width="12.800" height="7.400" rx="1" fill="currentColor" stroke="none" />
        <path d="M19.500 4.500V8.500" strokeWidth="2" />
      </Icon>
      <div className="ml-[18px] w-[70px] pb-[2px] text-right leading-5 tracking-[0.050px]">
        <div>3:04 PM</div>
        <div>5/31/2023</div>
      </div>
      <span className="ml-[8px] flex h-5 w-6 items-center justify-center rounded-full bg-[#0560b6] text-[12px] text-white">22</span>
    </div>
  );
}

function Taskbar() {
  return (
    <footer className="flex h-[60px] items-center border-t border-[#a9bcab] bg-linear-to-r from-[#cff5d0] via-[#cdf4d9] to-[#cdf4d3]">
      <svg width="30" height="28" viewBox="0 0 30 28" className="ml-[14px]">
        <defs><linearGradient id="moon" x1="0" y1="0" x2="1" y2="1"><stop stopColor="#aab4bd" /><stop offset="1" stopColor="#697580" /></linearGradient></defs>
        <circle cx="14" cy="13.500" r="13" fill="url(#moon)" />
        <path d="M16 24A4.700 4.700 0 0 1 16.500 15 5.300 5.300 0 0 1 25.500 16 4 4 0 0 1 26 24Z" fill="#e4e9f0" />
      </svg>
      <svg width="30" height="30" viewBox="0 0 30 30" className="ml-[513px]">
        <defs><linearGradient id="win" x1="0" y1="0" x2="1" y2="1"><stop stopColor="#4ccbfd" /><stop offset="1" stopColor="#0069cc" /></linearGradient></defs>
        <path d="M1 .5H14.500V14H.5V1ZM15.500.5H29.500V14H15.500ZM.5 15H14.500V29.500H.5ZM15.500 15H29.500V29.500H15.500Z" fill="url(#win)" />
      </svg>
      <div className="ml-[16px] flex h-[38px] w-[275px] items-center rounded-full border border-[#c3e2c8] border-b-[#a8c9ae] bg-[#f1fcf3] pl-[13px] text-[#505c53]">
        <Icon w={19} h={20} className="text-[#222]"><circle cx="8" cy="8" r="6.600" strokeWidth="1.800" /><path d="M12.800 13 18 18.500" strokeWidth="2" /></Icon>
        <span className="ml-[12px] font-['Open_Sans'] text-[16.400px]">Search</span>
        <svg width="26" height="27" viewBox="0 0 26 27" className="mr-[6px] ml-auto">
          <defs><linearGradient id="bing" x1="0" y1="0" x2="1" y2="1"><stop stopColor="#22c3f0" /><stop offset="1" stopColor="#1547c2" /></linearGradient></defs>
          <path d="M13 1.500A11.500 11.500 0 1 1 9 24L1.500 25.500V13A11.500 11.500 0 0 1 13 1.500Z" fill="#f4fdff" stroke="url(#bing)" strokeWidth="1.800" />
          <path d="M8.500 5 12 6.500V17.500L16.500 15 13.500 13.500 12.500 10.500 18.500 13Q20 17 16.500 19L12 21.500 8.500 19.500Z" fill="url(#bing)" />
        </svg>
      </div>
      <AppIcons />
      <Tray />
    </footer>
  );
}

export default function App() {
  return (
    <div className="flex h-[1080px] w-[1920px] flex-col overflow-hidden font-['Inter',sans-serif] text-[13.750px]">
      <TitleBar />
      <Toolbar />
      <div className="flex h-[912px]">
        <LayersPanel />
        <Canvas />
        <DesignPanel />
      </div>
      <Taskbar />
    </div>
  );
}
